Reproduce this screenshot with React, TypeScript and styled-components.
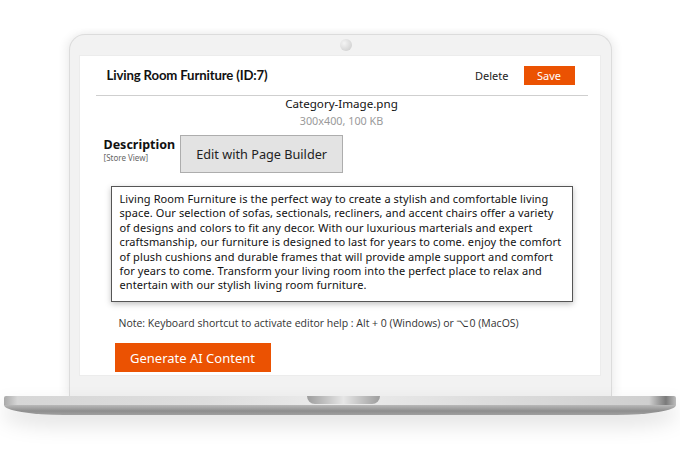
import React, { FC } from 'react';
import styled, { createGlobalStyle } from 'styled-components';

const GlobalStyle = createGlobalStyle`
  html, body {
    margin: 0;
    padding: 0;
    background: #ffffff;
  }
  body {
    font-family: 'Noto Sans', 'Liberation Sans', sans-serif;
    color: #1a1a1a;
  }
`;

const Stage = styled.div`
  width: 680px;
  height: 450px;
  display: flex;
  flex-direction: column;
  align-items: center;
  padding-top: 34px;
  box-sizing: border-box;
  overflow: hidden;
`;

const Lid = styled.div`
  width: 543px;
  box-sizing: border-box;
  background: #f2f2f2;
  border: 1px solid #dcdcdc;
  border-bottom: none;
  border-radius: 16px 16px 0 0;
  box-shadow: -4px 0 8px rgba(0, 0, 0, 0.06), 4px 0 8px rgba(0, 0, 0, 0.06);
  padding: 0 10px 20px 9px;
  display: flex;
  flex-direction: column;
`;

const CameraBar = styled.div`
  height: 20px;
  display: flex;
  justify-content: center;
  align-items: center;
`;

const Camera = styled.div`
  width: 12px;
  height: 12px;
  border-radius: 50%;
  background: radial-gradient(circle at 35% 35%, #f4f4f4, #c9c9c9);
  margin-left: 13px;
`;

const Screen = styled.div`
  background: #ffffff;
  height: 321px;
  padding: 0 13px 0 17px;
  box-sizing: border-box;
  display: flex;
  flex-direction: column;
  box-shadow: inset 0 0 0 1px #ececec;
`;

const Header = styled.div`
  height: 40px;
  display: flex;
  align-items: center;
  justify-content: space-between;
  padding: 0 13px 0 11px;
  border-bottom: 1px solid #cfcfcf;
  flex-shrink: 0;
`;

const Title = styled.h1`
  margin: 0;
  font-family: Lato, 'Noto Sans', sans-serif;
  font-size: 13.2px;
  letter-spacing: -0.15px;
  font-weight: 700;
  color: #111;
`;

const Actions = styled.div`
  display: flex;
  align-items: center;
  gap: 15px;
`;

const LinkButton = styled.span`
  font-size: 11px;
  color: #222;
`;

const OrangeButton = styled.button<{ $large?: boolean }>`
  border: none;
  background: #eb5202;
  color: #fff;
  font-family: inherit;
  font-size: ${(p) => (p.$large ? '13px' : '11px')};
  padding: 0;
  width: ${(p) => (p.$large ? '156px' : '51px')};
  height: ${(p) => (p.$large ? '29px' : '19px')};
  cursor: pointer;
`;

const FileInfo = styled.div`
  display: flex;
  flex-direction: column;
  align-items: center;
  gap: 3px;
`;

const FileName = styled.div`
  font-size: 11.6px;
  line-height: 15px;
  color: #111;
`;

const FileMeta = styled.div`
  font-size: 10.8px;
  line-height: 14px;
  color: #9a9a9a;
`;

const DescRow = styled.div`
  display: flex;
  align-items: flex-start;
  gap: 5px;
  margin-top: 7px;
  padding-left: 8px;
`;

const Label = styled.div`
  display: flex;
  flex-direction: column;
  padding-top: 2px;
`;

const LabelTitle = styled.div`
  font-size: 12.5px;
  font-weight: 700;
  line-height: 15px;
  color: #111;
`;

const LabelScope = styled.div`
  font-size: 8px;
  line-height: 12px;
  color: #666;
`;

const GrayButton = styled.button`
  width: 163px;
  height: 38px;
  background: #e3e3e3;
  border: 1px solid #adadad;
  font-family: inherit;
  font-size: 12.7px;
  color: #222;
  padding: 0;
`;

const Editor = styled.div`
  margin: 13px 15px 0 15px;
  border: 1px solid #555;
  box-shadow: 0 2px 6px rgba(0, 0, 0, 0.25);
  padding: 5px 8px 8px 8px;
  font-size: 11px;
  letter-spacing: 0.1px;
  line-height: 14.4px;
  color: #111;
  height: 116px;
  box-sizing: border-box;
`;

const Note = styled.div`
  margin: 14px 0 0 15px;
  font-family: 'Open Sans', 'Noto Sans', sans-serif;
  font-size: 10.5px;
  line-height: 15px;
  color: #333;
  padding-left: 8px;
`;

const GenerateRow = styled.div`
  margin: 12px 0 0 19px;
`;

const Base = styled.div`
  width: 672px;
  display: flex;
  flex-direction: column;
  align-items: center;
  filter: drop-shadow(0 10px 10px rgba(0, 0, 0, 0.12));
`;

const BaseTop = styled.div`
  width: 100%;
  height: 9px;
  background: linear-gradient(
    90deg,
    #a9a9a9 0%,
    #d6d6d6 2%,
    #dedede 30%,
    #ececec 50%,
    #dedede 70%,
    #cfcfcf 96%,
    #7a7a7a 98.5%,
    #bdbdbd 100%
  );
  border-radius: 2px 2px 0 0;
  display: flex;
  justify-content: center;
`;

const Notch = styled.div`
  width: 73px;
  height: 8px;
  margin-left: 7px;
  border-radius: 0 0 8px 8px;
  background: linear-gradient(90deg, #9d9d9d, #e6e6e6 50%, #9d9d9d);
`;

const BaseLip = styled.div`
  width: 100%;
  height: 10px;
  background: linear-gradient(180deg, #b9b9b9 0%, #8e8e8e 60%, #a0a0a0 100%);
  border-radius: 0 0 60px 60px / 0 0 10px 10px;
`;

const description =
  'Living Room Furniture is the perfect way to create a stylish and comfortable living space. Our selection of sofas, sectionals, recliners, and accent chairs offer a variety of designs and colors to fit any decor. With our luxurious marterials and expert craftsmanship, our furniture is designed to last for years to come. enjoy the comfort of plush cushions and durable frames that will provide ample support and comfort for years to come. Transform your living room into the perfect place to relax and entertain with our stylish living room furniture.';

const App: FC = () => {
  return (
    <Stage>
      <GlobalStyle />
      <Lid>
        <CameraBar>
          <Camera />
        </CameraBar>
        <Screen>
          <Header>
            <Title>Living Room Furniture (ID:7)</Title>
            <Actions>
              <LinkButton>Delete</LinkButton>
              <OrangeButton>Save</OrangeButton>
            </Actions>
          </Header>
          <FileInfo>
            <FileName>Category-Image.png</FileName>
            <FileMeta>300x400, 100 KB</FileMeta>
          </FileInfo>
          <DescRow>
            <Label>
              <LabelTitle>Description</LabelTitle>
              <LabelScope>[Store View]</LabelScope>
            </Label>
            <GrayButton>Edit with Page Builder</GrayButton>
          </DescRow>
          <Editor>{description}</Editor>
          <Note>
            Note: Keyboard shortcut to activate editor help : Alt + 0 (Windows) or ⌥0 (MacOS)
          </Note>
          <GenerateRow>
            <OrangeButton $large>Generate AI Content</OrangeButton>
          </GenerateRow>
        </Screen>
      </Lid>
      <Base>
        <BaseTop>
          <Notch />
        </BaseTop>
        <BaseLip />
      </Base>
    </Stage>
  );
};

export default App;
